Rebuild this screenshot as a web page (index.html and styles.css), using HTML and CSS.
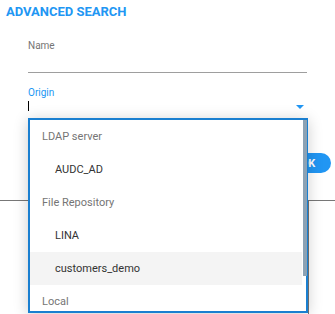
FILE: index.html
```html
<!DOCTYPE html>
<html lang="en">
<head>
    <meta charset="UTF-8">
    <meta name="viewport" content="width=device-width, initial-scale=1.0">
    <title>Advanced Search</title>
    <link rel="stylesheet" href="styles.css">
</head>
<body>
    <div class="search">
        <h1 class="search-title">ADVANCED SEARCH</h1>
        <div class="fields">
            <div class="field">
                <label class="field-label">Name</label>
                <div class="field-input"></div>
            </div>
            <div class="field field-focused">
                <label class="field-label">Origin</label>
                <div class="field-input field-select">
                    <span class="cursor"></span>
                    <span class="caret"></span>
                </div>
            </div>
        </div>
        <div class="actions">
            <button class="btn-primary">OK</button>
        </div>
        <div class="results">
            <div class="results-cell"></div>
            <div class="results-cell"></div>
        </div>
    </div>

    <!-- Origin dropdown menu -->
    <div class="dropdown">
        <ul class="dropdown-list">
            <li class="group">LDAP server</li>
            <li class="option">AUDC_AD</li>
            <li class="group">File Repository</li>
            <li class="option">LINA</li>
            <li class="option hover">customers_demo</li>
            <li class="group">Local</li>
        </ul>
        <span class="scroll-thumb"></span>
    </div>
</body>
</html>
```

FILE: styles.css
```css
/* Global */
body, html {
    margin: 0;
    height: 100%;
    background: #ffffff;
    font-family: Roboto, "Liberation Sans", sans-serif;
    overflow: hidden;
}

body {
    position: relative;
}

/* Search panel */
.search-title {
    margin: 0;
    padding: 4px 6px 0;
    font-size: 13px;
    line-height: 16px;
    font-weight: 700;
    color: #2196f3;
}

.fields {
    padding: 20px 28px 0;
}

.field {
    margin-bottom: 14px;
}

.field-label {
    display: block;
    font-size: 10px;
    line-height: 12px;
    color: #757575;
}

.field-input {
    height: 20px;
    border-bottom: 1px solid #9e9e9e;
}

.field-focused {
    margin-bottom: 0;
}

.field-focused .field-label {
    color: #2196f3;
}

.field-select {
    display: flex;
    align-items: flex-start;
    justify-content: space-between;
    height: 19px;
    border-bottom: 2px solid #1a7fd0;
}

.cursor {
    width: 1px;
    height: 10px;
    margin-top: 2px;
    background: #000;
}

.caret {
    width: 0;
    height: 0;
    margin: 6px 3px 0 0;
    border-left: 4px solid transparent;
    border-right: 4px solid transparent;
    border-top: 4px solid #2196f3;
}

/* Actions */
.actions {
    display: flex;
    justify-content: flex-end;
    margin-top: 33px;
    padding-right: 4px;
}

.btn-primary {
    width: 44px;
    height: 20px;
    padding: 0 2px 0 0;
    border: none;
    border-radius: 10px;
    background: #2196f3;
    color: #ffffff;
    font-family: inherit;
    font-size: 11px;
    font-weight: 700;
}

/* Results table behind the menu */
.results {
    display: grid;
    grid-template-columns: 308px 1fr;
    height: 120px;
    margin-top: 27px;
    border-top: 1px solid #777;
}

.results-cell + .results-cell {
    border-left: 1px solid #777;
}

/* Dropdown */
.dropdown {
    position: absolute;
    top: 118px;
    left: 28px;
    width: 280px;
    height: 195px;
    box-sizing: border-box;
    border: 2px solid #1a7fd0;
    background: #ffffff;
    box-shadow: 0 2px 14px rgba(0, 0, 0, 0.2);
}

.dropdown-list {
    height: 100%;
    margin: 0;
    padding: 0 4px 0 0;
    list-style: none;
    overflow: hidden;
}

.dropdown-list li {
    height: 33px;
    line-height: 33px;
    font-size: 11px;
}

.group {
    padding-left: 12px;
    color: #757575;
}

.option {
    padding-left: 25px;
    color: #333;
}

.option.hover {
    background: #f4f4f4;
}

.scroll-thumb {
    position: absolute;
    top: 0;
    right: -1px;
    width: 4px;
    height: 156px;
    background: #8ca2b4;
}
```
